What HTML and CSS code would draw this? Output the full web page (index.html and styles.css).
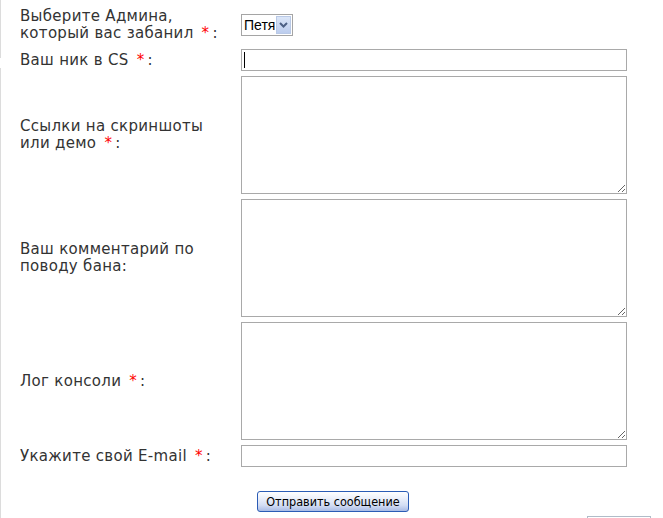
FILE: index.html
```html
<!DOCTYPE html>
<html lang="ru">
<head>
<meta charset="utf-8">
<title>Заявка на разбан</title>
<link rel="stylesheet" href="styles.css">
</head>
<body>
<div class="page">
  <div class="rail">
    <div class="rail-top"></div>
    <div class="rail-bottom"></div>
  </div>
  <div class="main">
    <form class="form">
      <div class="label">Выберите Админа,<br>который вас забанил <span class="req">*</span>:</div>
      <div class="field">
        <div class="select">
          <span class="select-text">Петя</span>
          <span class="select-btn">
            <svg width="9" height="6" viewBox="0 0 9 6"><path d="M1 1 L4.5 4.5 L8 1" fill="none" stroke="#4d6185" stroke-width="2"/></svg>
          </span>
        </div>
      </div>

      <div class="label">Ваш ник в CS <span class="req">*</span>:</div>
      <div class="field">
        <div class="input"><span class="caret"></span></div>
      </div>

      <div class="label">Ссылки на скриншоты<br>или демо <span class="req">*</span>:</div>
      <div class="field"><textarea class="area"></textarea></div>

      <div class="label">Ваш комментарий по<br>поводу бана:</div>
      <div class="field"><textarea class="area"></textarea></div>

      <div class="label">Лог консоли <span class="req">*</span>:</div>
      <div class="field"><textarea class="area"></textarea></div>

      <div class="label">Укажите свой E-mail <span class="req">*</span>:</div>
      <div class="field"><div class="input"></div></div>

      <div class="spacer"></div>
      <div class="field submit-cell"><button type="button" class="submit">Отправить сообщение</button></div>
    </form>
    <div class="footer-row"><div class="footer-box"></div></div>
  </div>
</div>
</body>
</html>
```
FILE: styles.css
```css
html, body {
  margin: 0;
  padding: 0;
  background: #fff;
  overflow: hidden;
}
.page {
  display: flex;
  width: 663px;
  height: 518px;
  overflow: hidden;
}
.rail {
  width: 1px;
  display: flex;
  flex-direction: column;
  flex: none;
}
.rail-top {
  height: 58px;
  background: #dcdcdc;
}
.rail-bottom {
  margin-top: 10px;
  flex: 1;
  background: #dcdcdc;
}
.main {
  flex: 1;
  display: flex;
  flex-direction: column;
}
.form {
  display: grid;
  grid-template-columns: 221px 386px;
  grid-template-rows: 38px 22px 118px 118px 118px 22px 40px;
  row-gap: 5px;
  padding: 6px 0 0 19px;
  margin: 0;
  font-family: "DejaVu Sans", Verdana, sans-serif;
  font-size: 15px;
  line-height: 17px;
  letter-spacing: 0.3px;
  color: #333;
}
.label {
  align-self: center;
}
.req {
  color: #f00;
  margin: 0 3px 0 3px;
}
.field {
  display: flex;
  align-items: center;
}
.select {
  box-sizing: border-box;
  width: 52px;
  height: 22px;
  border: 1px solid #a5a5a5;
  display: flex;
  align-items: stretch;
  background: #fff;
}
.select-text {
  flex: 1;
  font-family: "Liberation Sans", Arial, sans-serif;
  font-size: 14px;
  line-height: 20px;
  letter-spacing: 0;
  color: #000;
  padding-left: 2px;
}
.select-btn {
  width: 15px;
  box-sizing: border-box;
  border: 1px solid #b9c9e6;
  background: linear-gradient(#dbe6f8, #bccdee);
  display: flex;
  align-items: center;
  justify-content: center;
  margin: 1px 1px 1px 0;
}
.input {
  box-sizing: border-box;
  width: 386px;
  height: 22px;
  border: 1px solid #a9a9a9;
  background: #fff;
  display: flex;
  align-items: center;
  padding-left: 2px;
}
.caret {
  width: 1px;
  height: 16px;
  background: #000;
}
.area {
  box-sizing: border-box;
  width: 386px;
  height: 118px;
  border: 1px solid #a9a9a9;
  margin: 0;
  padding: 2px;
  resize: both;
  font: inherit;
  outline: none;
}
.submit-cell {
  align-items: flex-end;
}
.submit {
  margin-left: 16px;
  width: 152px;
  height: 21px;
  box-sizing: border-box;
  border: 1px solid #2b5cb5;
  border-radius: 3px;
  background: linear-gradient(#ffffff 0%, #eef2fb 30%, #d3ddf4 70%, #a9bbe5 100%);
  font-family: "DejaVu Sans Condensed", "DejaVu Sans", Verdana, sans-serif;
  font-size: 12.5px;
  line-height: 17px;
  letter-spacing: 0;
  color: #000;
  padding: 0;
}
.footer-row {
  display: flex;
  justify-content: flex-end;
  padding-right: 12px;
  margin-top: 4px;
}
.footer-box {
  width: 64px;
  height: 20px;
  box-sizing: border-box;
  border: 1px solid #b0bcc8;
}
```
